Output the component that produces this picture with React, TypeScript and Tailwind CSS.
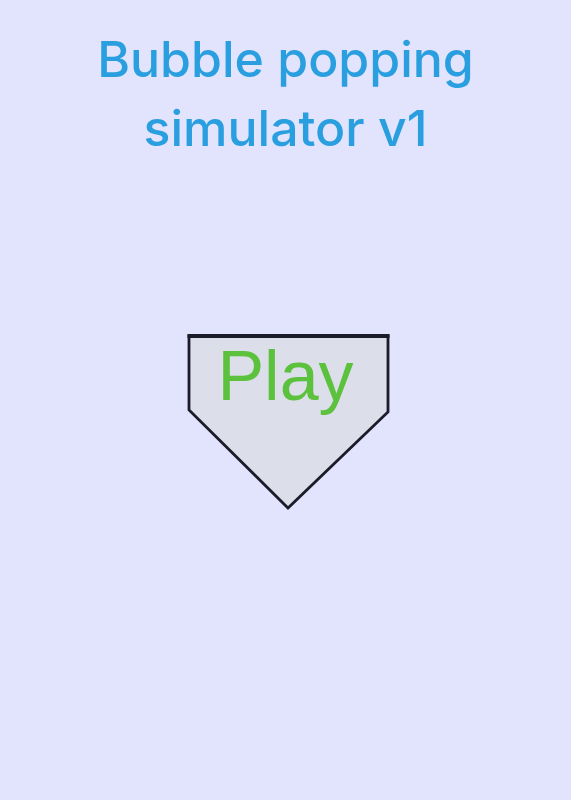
import React from "react"

export default function App() {
    return (
        <div className="min-h-[800px] w-full bg-[#e2e3fd] flex flex-col items-center">
            <h1 className="mt-[25px] text-center text-[50px] leading-[69px] font-medium text-[#2a9fe0] font-['Inter','Lato',sans-serif]">
                Bubble popping
                <br />
                simulator v1
            </h1>

            <button className="relative mt-[171px] ml-[6px] w-[203px] h-[176px] flex justify-center">
                <svg className="absolute inset-0" width="203" height="176" viewBox="0 0 203 176">
                    <polygon
                        points="2,2 201,2 201,78 101,174 2,76"
                        fill="#dcdee9"
                        stroke="#1b1b29"
                        strokeWidth="2.8"
                        strokeLinejoin="miter"
                    />
                    <line x1="0.5" y1="2" x2="202.5" y2="2" stroke="#1b1b29" strokeWidth="4" />
                </svg>
                <span className="relative mt-[2px] -ml-[6px] text-[70px] leading-[80px] text-[#5cc13c] font-['Liberation_Sans',Arial,sans-serif]">
                    Play
                </span>
            </button>
        </div>
    )
}
